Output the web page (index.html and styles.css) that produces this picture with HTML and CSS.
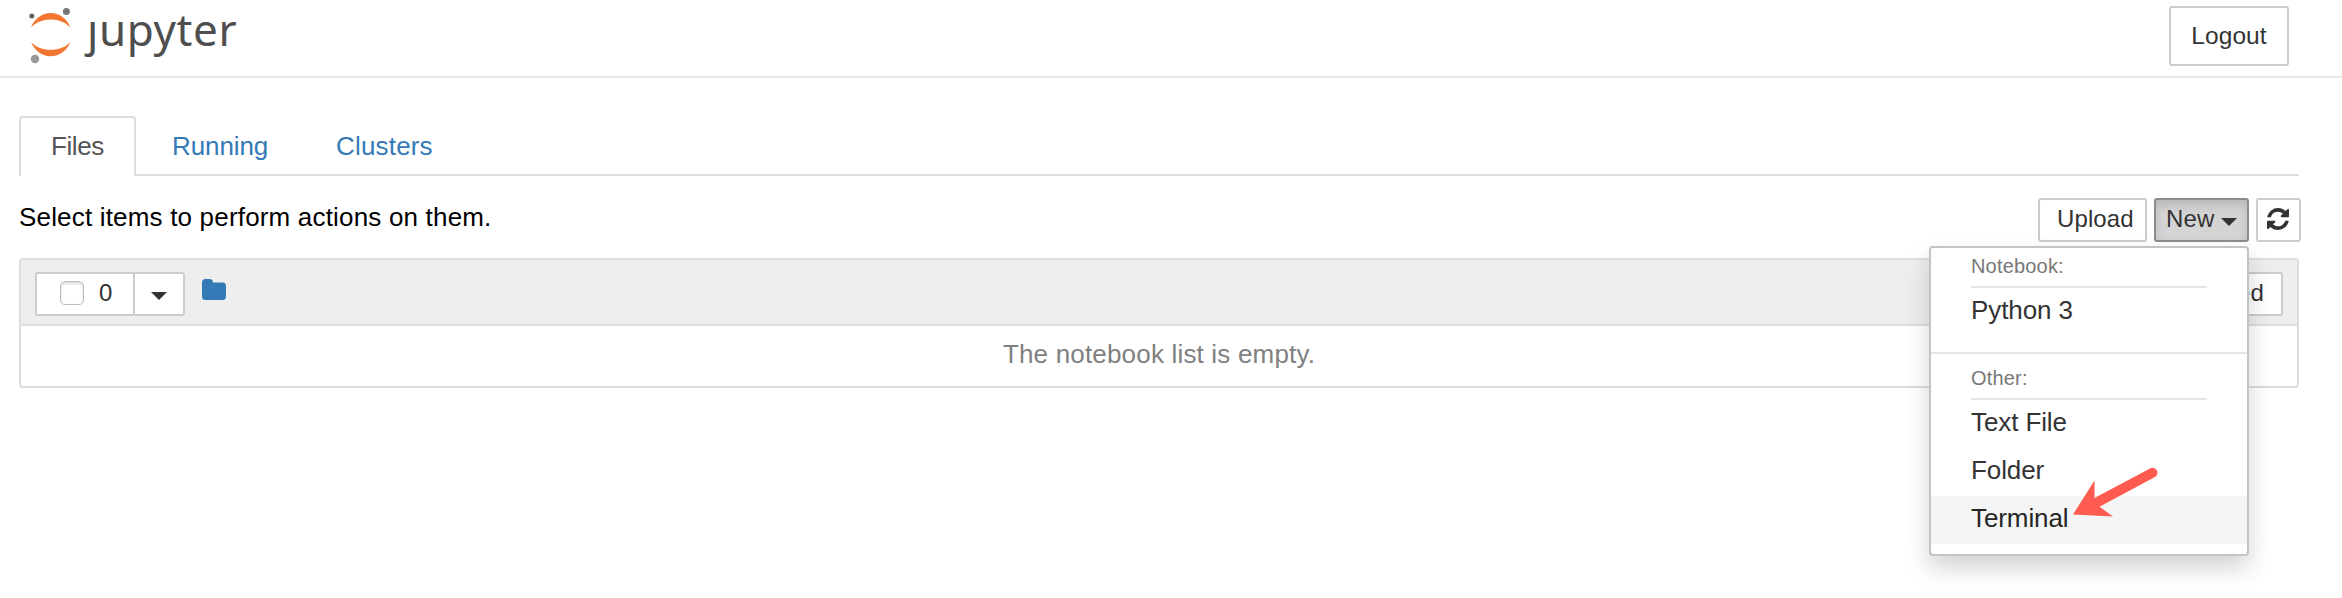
FILE: index.html
```html
<!DOCTYPE html>
<html lang="en">
<head>
<meta charset="utf-8">
<title>Home</title>
<link rel="stylesheet" href="styles.css">
</head>
<body>
<header class="header">
  <div class="brand">
    <svg class="planet" width="44" height="58" viewBox="0 0 44 58">
      <path fill="#f37733" d="M3 19.500C6.500 10.500 14 5 22.700 5S39 10.500 42.500 19.500C38 14.500 30.500 11.500 22.700 11.500S7.500 14.500 3 19.500ZM3 34C7.500 39 15 41.800 22.700 41.800S38 39 42.500 34C39 42.500 31.500 48.200 22.700 48.200S6.500 42.500 3 34Z"/>
      <circle cx="38.400" cy="3.600" r="3.500" fill="#767677"/>
      <circle cx="3.800" cy="8" r="2.500" fill="#616262"/>
      <circle cx="7" cy="51" r="4.200" fill="#989798"/>
    </svg>
    <span class="wordmark">ȷupyter</span>
  </div>
  <button class="btn logout">Logout</button>
</header>
<main class="site">
  <nav class="tabs">
    <a class="tab active">Files</a>
    <a class="tab running">Running</a>
    <a class="tab clusters">Clusters</a>
  </nav>
  <div class="toolbar">
    <div class="hint">Select items to perform actions on them.</div>
    <div class="actions">
      <button class="btn upload">Upload</button>
      <div class="dropdown">
        <button class="btn new">New<i class="caret"></i></button>
        <div class="menu">
          <div class="group first">Notebook:</div>
          <a class="item">Python 3</a>
          <div class="divider"></div>
          <div class="group">Other:</div>
          <a class="item">Text File</a>
          <a class="item">Folder</a>
          <a class="item hover">Terminal</a>
          <svg class="arrow" width="86" height="52" viewBox="0 0 86 52">
            <path fill="#ff5b51" d="M0 47.500L21.500 13.500V31L77 1.400A4.900 4.900 0 0 1 82 9.900L26.500 39.800L40 49.500Z"/>
          </svg>
        </div>
      </div>
      <button class="btn refresh">
        <svg width="22" height="22" viewBox="0 0 1536 1536">
          <path fill="#333" d="M1511 928q0 5-1 7-64 268-268 434.500T764 1536q-146 0-282.500-55T238 1324l-129 129q-19 19-45 19t-45-19-19-45V960q0-26 19-45t45-19h448q26 0 45 19t19 45-19 45l-137 137q71 66 161 102t187 36q134 0 250-65t186-179q11-17 53-117 8-23 30-23h192q13 0 22.500 9.500T1511 928zM1536 128v448q0 26-19 45t-45 19h-448q-26 0-45-19t-19-45 19-45l138-138Q969 256 768 256q-134 0-250 65T332 500q-11 17-53 117-8 23-30 23H50q-13 0-22.500-9.500T18 608v-7q65-268 270-434.500T768 0q146 0 284 55.500T1297 212l130-129q19-19 45-19t45 19 19 45z"/>
        </svg>
      </button>
    </div>
  </div>
  <section class="list">
    <div class="list-head">
      <div class="selector">
        <button class="btn select-all"><span class="check"></span>0</button>
        <button class="btn select-menu"><i class="caret"></i></button>
      </div>
      <svg class="folder" width="24" height="21" viewBox="0 0 24 21">
        <path fill="#337ab7" d="M0 3.500Q0 0 3.500 0H7.500Q11 0 11 3.500H20.500Q24 3.500 24 7V17.500Q24 21 20.500 21H3.500Q0 21 0 17.500Z"/>
      </svg>
      <button class="btn modified">Last Modified</button>
    </div>
    <div class="empty">The notebook list is empty.</div>
  </section>
</main>
</body>
</html>
```
FILE: styles.css
```css
* { box-sizing: border-box; }
html { background: #fff; }
body {
  margin: 0;
  min-height: 598px;
  background: #fff;
  color: #000;
  font: 26px/38px "Liberation Sans", Arial, sans-serif;
  letter-spacing: .18px;
}
.header {
  display: flex;
  justify-content: space-between;
  height: 78px;
  padding: 6px 53px 0 28px;
  border-bottom: 2px solid #e7e7e7;
}
.brand { display: flex; }
.planet { display: block; margin-top: 2px; }
.wordmark {
  margin: -2px 0 0 15px;
  color: #4e4e4e;
  font: 44px/50px "Noto Sans", sans-serif;
  letter-spacing: .6px;
}
.btn {
  display: flex;
  align-items: center;
  height: 44px;
  margin: 0;
  padding: 0 0 2px;
  border: 2px solid #ccc;
  border-radius: 3px;
  background: #fff;
  color: #333;
  font: inherit;
  font-size: 24px;
  letter-spacing: .1px;
  white-space: nowrap;
}
.logout { width: 120px; height: 60px; padding: 0; justify-content: center; font-size: 24.500px; }
.site { padding: 38px 43px 0 19px; }
.tabs {
  display: flex;
  height: 60px;
  border-bottom: 2px solid #ddd;
}
.tab {
  height: 60px;
  padding: 11px 0 0 34px;
  color: #337ab7;
}
.active {
  width: 117px;
  padding: 9px 0 0 30px;
  border: 2px solid #ddd;
  border-bottom: 0;
  border-radius: 4px 4px 0 0;
  background: #fff;
  color: #555;
  letter-spacing: -.4px;
}
.running { width: 166px; padding-left: 36px; letter-spacing: -.1px; }
.toolbar {
  display: flex;
  justify-content: space-between;
  height: 82px;
  margin-right: -2px;
  padding-top: 22px;
}
.hint { height: 38px; }
.actions { display: flex; gap: 7px; }
.upload { width: 109px; padding-left: 17px; }
.new {
  width: 95px;
  padding-left: 10px;
  gap: 7px;
  border-color: #8c8c8c;
  background: #d4d4d4;
  box-shadow: inset 0 6px 10px rgba(0, 0, 0, .125);
}
.refresh { width: 45px; padding-right: 1px; justify-content: center; }
.caret {
  width: 0;
  height: 0;
  border: 8px solid transparent;
  border-top-color: #333;
  border-bottom: 0;
}
.new .caret { margin-top: 5px; }
.dropdown { position: relative; }
.menu {
  position: absolute;
  top: 48px;
  right: 0;
  z-index: 2;
  width: 320px;
  height: 310px;
  border: 2px solid #c4c4c4;
  border-radius: 4px;
  background: #fff;
  box-shadow: 0 12px 24px rgba(0, 0, 0, .175);
}
.group {
  height: 46px;
  margin: 0 40px;
  padding-top: 8px;
  border-bottom: 2px solid #e5e5e5;
  color: #777;
  font-size: 20px;
  line-height: 32px;
}
.first { height: 40px; padding-top: 2px; }
.item {
  display: block;
  height: 48px;
  padding: 3px 40px 0;
  color: #333;
  letter-spacing: -.1px;
}
.hover { background: #f5f5f5; color: #262626; }
.divider { height: 2px; margin-top: 16px; background: #e5e5e5; }
.arrow { position: absolute; left: 142px; top: 219px; }
.list {
  height: 130px;
  border: 2px solid #ddd;
  border-radius: 4px;
}
.list-head {
  display: flex;
  height: 66px;
  padding: 12px 14px 0;
  border-bottom: 2px solid #ddd;
  background: #eee;
}
.selector { display: flex; }
.select-all {
  width: 100px;
  padding-left: 23px;
  gap: 15px;
  border-radius: 3px 0 0 3px;
}
.select-menu {
  width: 52px;
  margin-left: -2px;
  padding: 4px 0 0;
  justify-content: center;
  border-radius: 0 3px 3px 0;
}
.check {
  width: 24px;
  height: 24px;
  border: 1px solid #bbb;
  border-radius: 5px;
  background: #fff;
  box-shadow: inset 0 2px 3px #ddd;
}
.folder { display: block; margin: 7px 0 0 17px; }
.modified { margin-left: auto; padding: 0 17px 2px; }
.empty {
  padding-top: 9px;
  color: #808080;
  text-align: center;
  letter-spacing: .18px;
}
```
